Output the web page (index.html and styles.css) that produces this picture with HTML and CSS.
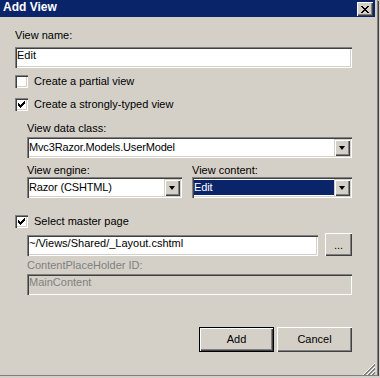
FILE: index.html
```html
<!DOCTYPE html>
<html lang="en">
  <head>
    <meta charset="utf-8" />
    <title>Add View</title>
    <link rel="stylesheet" href="styles.css">
  </head>

  <body>
    <div class="window">
      <div class="titlebar">
        <span class="title">Add View</span>
        <div class="close">
          <svg width="8" height="7" viewBox="0 0 8 7" shape-rendering="crispEdges">
            <path d="M0 0h2v1h-2zM6 0h2v1h-2zM1 1h2v1h-2zM5 1h2v1h-2zM2 2h4v1h-4zM3 3h2v1h-2zM2 4h4v1h-4zM1 5h2v1h-2zM5 5h2v1h-2zM0 6h2v1h-2zM6 6h2v1h-2z" fill="#000"/>
          </svg>
        </div>
      </div>

      <div class="dialog">
        <div class="lbl">View name:</div>
        <div class="edit name-edit">Edit</div>

        <div class="check first-check">
          <span class="box"></span>
          <span class="check-text">Create a partial view</span>
        </div>

        <div class="check second-check">
          <span class="box checked">
            <svg width="7" height="7" viewBox="0 0 7 7" shape-rendering="crispEdges">
              <path d="M0 2h1v3h-1zM1 3h1v3h-1zM2 4h1v3h-1zM3 3h1v3h-1zM4 2h1v3h-1zM5 1h1v3h-1zM6 0h1v3h-1z" fill="#000"/>
            </svg>
          </span>
          <span class="check-text">Create a strongly-typed view</span>
        </div>

        <div class="indent">
          <div class="lbl data-lbl">View data class:</div>
          <div class="combo">
            <span class="combo-text">Mvc3Razor.Models.UserModel</span>
            <span class="combo-btn"><span class="arrow"></span></span>
          </div>

          <div class="pair">
            <div class="engine-col">
              <div class="lbl">View engine:</div>
              <div class="combo">
                <span class="combo-text">Razor (CSHTML)</span>
                <span class="combo-btn"><span class="arrow"></span></span>
              </div>
            </div>
            <div class="content-col">
              <div class="lbl">View content:</div>
              <div class="combo">
                <span class="combo-text selected">Edit</span>
                <span class="combo-btn"><span class="arrow"></span></span>
              </div>
            </div>
          </div>
        </div>

        <div class="check master-check">
          <span class="box checked">
            <svg width="7" height="7" viewBox="0 0 7 7" shape-rendering="crispEdges">
              <path d="M0 2h1v3h-1zM1 3h1v3h-1zM2 4h1v3h-1zM3 3h1v3h-1zM4 2h1v3h-1zM5 1h1v3h-1zM6 0h1v3h-1z" fill="#000"/>
            </svg>
          </span>
          <span class="check-text">Select master page</span>
        </div>

        <div class="indent">
          <div class="path-row">
            <div class="edit path-edit">~/Views/Shared/_Layout.cshtml</div>
            <div class="btn browse">...</div>
          </div>
          <div class="lbl disabled placeholder-lbl">ContentPlaceHolder ID:</div>
          <div class="edit disabled-edit">MainContent</div>
        </div>

        <div class="buttons">
          <div class="btn default">Add</div>
          <div class="btn">Cancel</div>
        </div>
      </div>

      <div class="grip">
        <svg width="12" height="12" viewBox="0 0 12 12" shape-rendering="crispEdges">
          <line x1="12" y1="0" x2="0" y2="12" stroke="#fff"/>
          <line x1="12" y1="1" x2="1" y2="12" stroke="#808080"/>
          <line x1="12" y1="2" x2="2" y2="12" stroke="#808080"/>
          <line x1="12" y1="4" x2="4" y2="12" stroke="#fff"/>
          <line x1="12" y1="5" x2="5" y2="12" stroke="#808080"/>
          <line x1="12" y1="6" x2="6" y2="12" stroke="#808080"/>
          <line x1="12" y1="8" x2="8" y2="12" stroke="#fff"/>
          <line x1="12" y1="9" x2="9" y2="12" stroke="#808080"/>
          <line x1="12" y1="10" x2="10" y2="12" stroke="#808080"/>
        </svg>
      </div>
    </div>
  </body>
</html>
```

FILE: styles.css
```css
body {
  margin: 0;
  background-color: #d4d0c8;
  font-family: "Liberation Sans", Arial, sans-serif;
  font-size: 11px;
  line-height: 13px;
  color: #000;
}

.window {
  position: relative;
  width: 377px;
  height: 375px;
  background-color: #d4d0c8;
  border-right: 1px solid #808080;
  border-bottom: 1px solid #808080;
  box-shadow: 1px 1px 0 #404040;
}

.titlebar {
  display: flex;
  align-items: flex-start;
  justify-content: space-between;
  height: 17px;
  margin-right: 2px;
  background-color: #0a246a;
}

.title {
  padding: 1px 0 0 3px;
  color: #fff;
  font-size: 12px;
  font-weight: bold;
}

.close {
  display: flex;
  align-items: center;
  justify-content: center;
  width: 16px;
  height: 14px;
  margin: 2px 2px 0 0;
  background-color: #d4d0c8;
  box-shadow: inset 1px 1px #fff, inset -1px -1px #404040, inset -2px -2px #808080;
}

.dialog {
  padding: 12px 25px 0 15px;
}

.lbl {
  height: 13px;
  white-space: nowrap;
}

.disabled {
  color: #808080;
}

/* sunken 3d fields */
.edit {
  box-sizing: border-box;
  height: 21px;
  padding: 2px 0 0 2px;
  background-color: #fff;
  box-shadow: inset 1px 1px #808080, inset 2px 2px #404040, inset -1px -1px #fff, inset -2px -2px #d4d0c8;
  white-space: nowrap;
  overflow: hidden;
}

.name-edit {
  margin-top: 5px;
}

.check {
  display: flex;
  align-items: flex-start;
  height: 13px;
}

.first-check {
  margin-top: 7px;
}

.second-check {
  margin-top: 10px;
}

.master-check {
  margin-top: 17px;
}

.box {
  box-sizing: border-box;
  display: flex;
  width: 13px;
  height: 13px;
  padding: 3px;
  background-color: #fff;
  box-shadow: inset 1px 1px #808080, inset 2px 2px #404040, inset -1px -1px #fff, inset -2px -2px #d4d0c8;
}

.check-text {
  margin-left: 6px;
  white-space: nowrap;
}

.indent {
  margin-left: 12px;
}

.data-lbl {
  margin-top: 11px;
}

.combo {
  box-sizing: border-box;
  display: flex;
  height: 21px;
  margin-top: 2px;
  padding: 2px;
  background-color: #fff;
  box-shadow: inset 1px 1px #808080, inset 2px 2px #404040, inset -1px -1px #fff, inset -2px -2px #d4d0c8;
}

.combo-text {
  flex: 1;
  padding: 2px 0 0 0;
  white-space: nowrap;
  overflow: hidden;
  letter-spacing: -0.15px;
}

.combo-text.selected {
  margin: 1px 0 1px 0;
  padding: 1px 0 0 0;
  background-color: #0a246a;
  color: #fff;
}

.combo-btn {
  display: flex;
  align-items: center;
  justify-content: center;
  width: 16px;
  height: 17px;
  background-color: #d4d0c8;
  box-shadow: inset 1px 1px #d4d0c8, inset 2px 2px #fff, inset -1px -1px #404040, inset -2px -2px #808080;
}

.arrow {
  width: 0;
  height: 0;
  border-left: 3.5px solid transparent;
  border-right: 3.5px solid transparent;
  border-top: 4px solid #000;
}

.pair {
  display: flex;
  gap: 10px;
  margin-top: 6px;
}

.pair .combo {
  margin-top: 0;
}

.engine-col {
  width: 155px;
}

.content-col {
  width: 160px;
}

.path-row {
  display: flex;
  align-items: flex-start;
  gap: 7px;
  margin-top: 5px;
}

.path-edit {
  width: 291px;
  margin-top: 2px;
}

.btn {
  box-sizing: border-box;
  display: flex;
  align-items: center;
  justify-content: center;
  background-color: #d4d0c8;
  box-shadow: inset 1px 1px #fff, inset -1px -1px #404040, inset -2px -2px #808080;
}

.browse {
  width: 27px;
  height: 23px;
  padding-top: 2px;
}

.placeholder-lbl {
  margin-top: 3px;
}

.disabled-edit {
  margin-top: 2px;
  background-color: #d4d0c8;
  color: #808080;
}

.buttons {
  display: flex;
  justify-content: flex-end;
  gap: 3px;
  margin-top: 32px;
}

.buttons .btn {
  width: 75px;
  height: 25px;
}

.btn.default {
  border: 1px solid #000;
  box-shadow: inset 1px 1px #fff, inset -1px -1px #404040, inset -2px -2px #808080;
}

.grip {
  position: absolute;
  right: 2px;
  bottom: 0;
  width: 12px;
  height: 12px;
}
```
